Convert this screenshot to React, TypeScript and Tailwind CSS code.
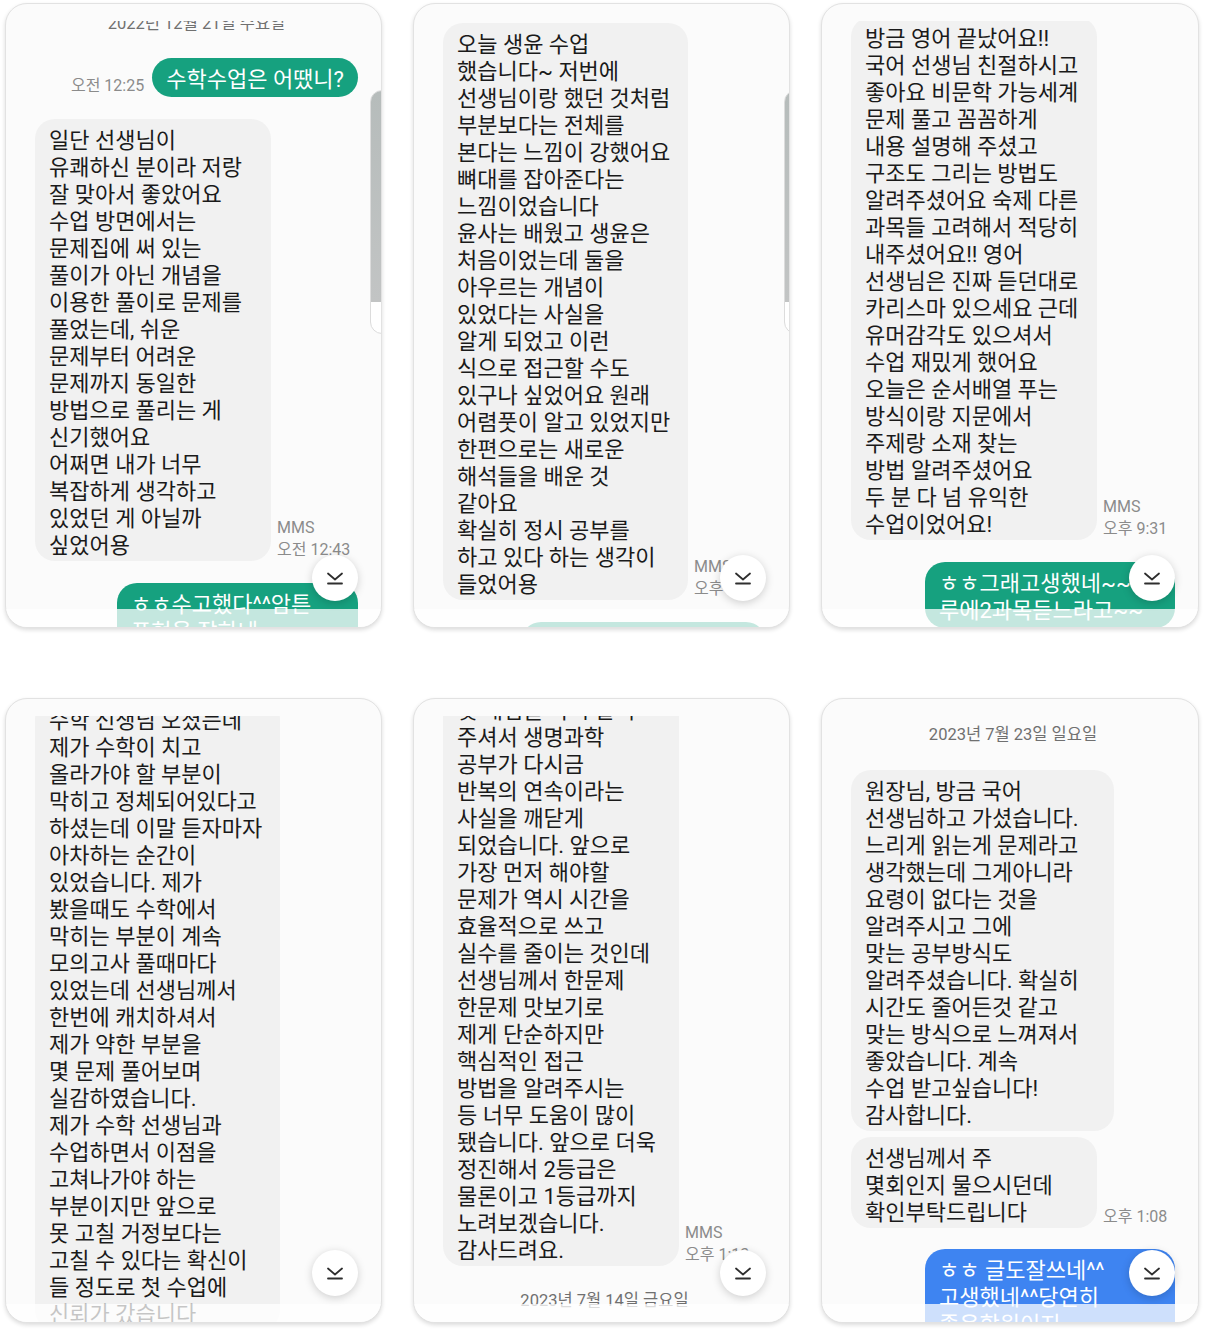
import React from 'react';

const Lines: React.FC<{ lines: string[] }> = ({ lines }) => (
  <>
    {lines.map((l, i) => (
      <div key={i} className="whitespace-pre leading-[27px]">{l}</div>
    ))}
  </>
);

const Received: React.FC<{ lines: string[]; w: string; meta?: string[]; mt: string }> = ({ lines, w, meta, mt }) => (
  <div className={`flex items-end gap-[6px] shrink-0 ${mt}`}>
    <div className={`${w} shrink-0 rounded-[20px] bg-[#f1f1f1] px-[14px] pt-[8px] pb-[2px] text-[22px] text-[#1a1a1a]`}>
      <Lines lines={lines} />
    </div>
    {meta && (
      <div className="text-[16px] leading-[22px] text-[#8b8b8b] whitespace-nowrap">
        {meta.map((m) => <div key={m}>{m}</div>)}
      </div>
    )}
  </div>
);

const Sent: React.FC<{ lines: string[]; w: string; mt: string; blue?: boolean }> = ({ lines, w, mt, blue }) => (
  <div className={`${w} ${mt} self-end shrink-0 rounded-[20px] px-[14px] pt-[8px] pb-[4px] text-[22px] text-white ${blue ? 'bg-[#3e84f1]' : 'bg-[#16a17f]'}`}>
    <Lines lines={lines} />
  </div>
);

const DateLine: React.FC<{ text: string; mt: string }> = ({ text, mt }) => (
  <div className={`${mt} shrink-0 text-center text-[16.5px] leading-[20px] text-[#707070]`}>{text}</div>
);

const DownButton = () => (
  <div className="absolute right-[23px] bottom-[26px] flex h-[46px] w-[46px] items-center justify-center rounded-full bg-white shadow-[0_2px_8px_rgba(0,0,0,0.18)]">
    <svg width="18" height="14" viewBox="0 0 18 14" fill="none" stroke="#2e2e2e" strokeWidth="1.8" strokeLinecap="round" strokeLinejoin="round">
      <path d="M2 2.5l7 6 7-6" />
      <path d="M2 12.5h14" />
    </svg>
  </div>
);

const Card: React.FC<{ children: React.ReactNode; scroller?: string }> = ({ children, scroller }) => (
  <div className="relative h-[625px] overflow-hidden rounded-[22px] border border-[#e2e2e2] bg-[#fbfbfb] pt-[17px] shadow-[0_2px_4px_rgba(0,0,0,0.14)]">
    <div className="flex h-full flex-col overflow-hidden pl-[29px] pr-[23px]">{children}</div>
    {scroller && (
      <div className={`absolute top-[86px] h-[244px] w-[24px] rounded-full border border-[#dcdcdc] bg-[linear-gradient(to_bottom,#b6bcbb_0%,#c2c4c4_87%,#ffffff_87%)] ${scroller}`} />
    )}
    <div className="absolute inset-x-0 bottom-0 h-[18px] bg-white/75" />
    <DownButton />
  </div>
);

export default function App() {
  return (
    <div className="min-h-[1329px] w-[1205px] bg-white pl-[5px] pt-[3px] font-[Roboto,'Noto_Sans_CJK_KR',sans-serif]">
      <div className="grid grid-cols-[377px_377px_378px] gap-x-[31px] gap-y-[70px]">
        <Card scroller="right-[-13px]">
          <DateLine text="2022년 12월 21일 수요일" mt="-mt-[7px]" />
          <div className="mt-[24px] flex shrink-0 items-end justify-end gap-[8px]">
            <div className="text-[16px] leading-[22px] text-[#8b8b8b]">오전 12:25</div>
            <div className="rounded-full bg-[#16a17f] px-[14px] pt-[8px] pb-[4px] text-[22px] text-white">
              <div className="whitespace-pre leading-[27px]">수학수업은 어땠니?</div>
            </div>
          </div>
          <Received
            mt="mt-[22px]"
            w="w-[236px]"
            meta={['MMS', '오전 12:43']}
            lines={[
              '일단 선생님이',
              '유쾌하신 분이라 저랑',
              '잘 맞아서 좋았어요',
              '수업 방면에서는',
              '문제집에 써 있는',
              '풀이가 아닌 개념을',
              '이용한 풀이로 문제를',
              '풀었는데, 쉬운',
              '문제부터 어려운',
              '문제까지 동일한',
              '방법으로 풀리는 게',
              '신기했어요',
              '어쩌면 내가 너무',
              '복잡하게 생각하고',
              '있었던 게 아닐까',
              '싶었어용',
            ]}
          />
          <Sent mt="mt-[22px]" w="w-[241px]" lines={['ㅎㅎ수고했다^^암튼', '표현을 잘하네']} />
        </Card>

        <Card scroller="right-[-19px]">
          <Received
            mt="mt-[2px]"
            w="w-[245px]"
            meta={['MMS', '오후 1:20']}
            lines={[
              '오늘 생윤 수업',
              '했습니다~ 저번에',
              '선생님이랑 했던 것처럼',
              '부분보다는 전체를',
              '본다는 느낌이 강했어요',
              '뼈대를 잡아준다는',
              '느낌이었습니다',
              '윤사는 배웠고 생윤은',
              '처음이었는데 둘을',
              '아우르는 개념이',
              '있었다는 사실을',
              '알게 되었고 이런',
              '식으로 접근할 수도',
              '있구나 싶었어요 원래',
              '어렴풋이 알고 있었지만',
              '한편으로는 새로운',
              '해석들을 배운 것',
              '같아요',
              '확실히 정시 공부를',
              '하고 있다 하는 생각이',
              '들었어용',
            ]}
          />
          <Sent mt="mt-[22px]" w="w-[245px]" lines={['ㅎㅎ그랬구나~~', '수고했다']} />
        </Card>

        <Card>
          <Received
            mt="-mt-[4px]"
            w="w-[246px]"
            meta={['MMS', '오후 9:31']}
            lines={[
              '방금 영어 끝났어요!!',
              '국어 선생님 친절하시고',
              '좋아요 비문학 가능세계',
              '문제 풀고 꼼꼼하게',
              '내용 설명해 주셨고',
              '구조도 그리는 방법도',
              '알려주셨어요 숙제 다른',
              '과목들 고려해서 적당히',
              '내주셨어요!! 영어',
              '선생님은 진짜 듣던대로',
              '카리스마 있으세요 근데',
              '유머감각도 있으셔서',
              '수업 재밌게 했어요',
              '오늘은 순서배열 푸는',
              '방식이랑 지문에서',
              '주제랑 소재 찾는',
              '방법 알려주셨어요',
              '두 분 다 넘 유익한',
              '수업이었어요!',
            ]}
          />
          <Sent mt="mt-[22px]" w="w-[250px]" lines={['ㅎㅎ그래고생했네~~하', '루에2과목듣느라고~~']} />
        </Card>

        <Card>
          <Received
            mt="-mt-[17px]"
            w="w-[245px]"
            lines={[
              '수학 선생님 오셨는데',
              '제가 수학이 치고',
              '올라가야 할 부분이',
              '막히고 정체되어있다고',
              '하셨는데 이말 듣자마자',
              '아차하는 순간이',
              '있었습니다. 제가',
              '봤을때도 수학에서',
              '막히는 부분이 계속',
              '모의고사 풀때마다',
              '있었는데 선생님께서',
              '한번에 캐치하셔서',
              '제가 약한 부분을',
              '몇 문제 풀어보며',
              '실감하였습니다.',
              '제가 수학 선생님과',
              '수업하면서 이점을',
              '고쳐나가야 하는',
              '부분이지만 앞으로',
              '못 고칠 거정보다는',
              '고칠 수 있다는 확신이',
              '들 정도로 첫 수업에',
              '신뢰가 갔습니다',
            ]}
          />
        </Card>

        <Card>
          <Received
            mt="-mt-[27px]"
            w="w-[236px]"
            meta={['MMS', '오후 1:13']}
            lines={[
              '및 개념을 다시 알려',
              '주셔서 생명과학',
              '공부가 다시금',
              '반복의 연속이라는',
              '사실을 깨닫게',
              '되었습니다. 앞으로',
              '가장 먼저 해야할',
              '문제가 역시 시간을',
              '효율적으로 쓰고',
              '실수를 줄이는 것인데',
              '선생님께서 한문제',
              '한문제 맛보기로',
              '제게 단순하지만',
              '핵심적인 접근',
              '방법을 알려주시는',
              '등 너무 도움이 많이',
              '됐습니다. 앞으로 더욱',
              '정진해서 2등급은',
              '물론이고 1등급까지',
              '노려보겠습니다.',
              '감사드려요.',
            ]}
          />
          <DateLine text="2023년 7월 14일 금요일" mt="mt-[25px]" />
        </Card>

        <Card>
          <DateLine text="2023년 7월 23일 일요일" mt="mt-[9px]" />
          <Received
            mt="mt-[25px]"
            w="w-[263px]"
            lines={[
              '원장님, 방금 국어',
              '선생님하고 가셨습니다.',
              '느리게 읽는게 문제라고',
              '생각했는데 그게아니라',
              '요령이 없다는 것을',
              '알려주시고 그에',
              '맞는 공부방식도',
              '알려주셨습니다. 확실히',
              '시간도 줄어든것 같고',
              '맞는 방식으로 느껴져서',
              '좋았습니다. 계속',
              '수업 받고싶습니다!',
              '감사합니다.',
            ]}
          />
          <Received
            mt="mt-[6px]"
            w="w-[246px]"
            meta={['오후 1:08']}
            lines={['선생님께서 주', '몇회인지 물으시던데', '확인부탁드립니다']}
          />
          <Sent mt="mt-[21px]" w="w-[250px]" blue lines={['ㅎㅎ 글도잘쓰네^^', '고생했네^^당연히', '좋은학원이지']} />
        </Card>
      </div>
    </div>
  );
}
